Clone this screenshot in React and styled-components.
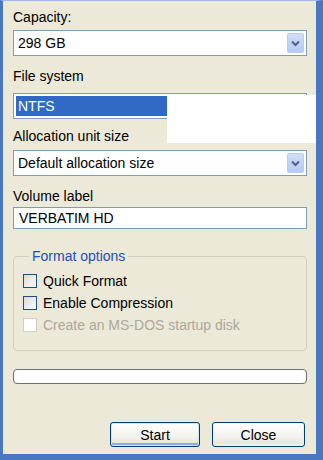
import React from "react";
import styled, { createGlobalStyle } from "styled-components";

const GlobalStyle = createGlobalStyle`
  html, body {
    margin: 0;
    padding: 0;
    background: #ffffff;
  }
  body {
    font-family: "Liberation Sans", Arial, sans-serif;
    font-size: 14px;
    color: #000;
  }
`;

const Frame = styled.div`
  position: relative;
  width: 323px;
  height: 460px;
  box-sizing: border-box;
  background: #ece9d8;
  border-top: 1px solid #9db7e6;
  border-left: 3px solid #4a78c0;
  border-right: 7px solid #4a78c0;
  border-bottom: 6px solid #4a78c0;
  overflow: hidden;
`;

const Content = styled.div`
  display: flex;
  flex-direction: column;
  padding: 8px 9px 0 10px;
`;

const Label = styled.div`
  line-height: 17px;
  height: 17px;
  margin-top: ${(p) => p.$top || 0}px;
  margin-bottom: ${(p) => p.$gap || 4}px;
  white-space: nowrap;
`;

const Combo = styled.div`
  display: flex;
  align-items: center;
  height: 26px;
  box-sizing: border-box;
  border: 1px solid #7f9db9;
  background: #fff;
  padding: 2px;
`;

const ComboText = styled.div`
  flex: 1;
  height: 100%;
  display: flex;
  align-items: center;
  padding-left: 2px;
  margin-right: 4px;
  background: ${(p) => (p.$selected ? "#316ac5" : "transparent")};
  color: ${(p) => (p.$selected ? "#fff" : "#000")};
`;

const DropButton = styled.div`
  width: 17px;
  height: 100%;
  box-sizing: border-box;
  border: 1px solid #b9cbf3;
  border-radius: 2px;
  background: linear-gradient(#d2def8, #b5c9f5);
  display: flex;
  align-items: center;
  justify-content: center;
`;

const TextBox = styled.div`
  height: 22px;
  box-sizing: border-box;
  border: 1px solid #7f9db9;
  background: #fff;
  display: flex;
  align-items: center;
  padding-left: 5px;
`;

const Group = styled.fieldset`
  margin: 19px 0 0;
  padding: 9px 9px 17px;
  border: 1px solid #d0d0bf;
  border-radius: 4px;
  display: flex;
  flex-direction: column;
  gap: 6px;
`;

const Legend = styled.legend`
  color: #1f4fb8;
  padding: 0 3px;
  margin-left: 6px;
  line-height: 16px;
`;

const CheckRow = styled.label`
  display: flex;
  align-items: center;
  gap: 6px;
  height: 16px;
  color: ${(p) => (p.$disabled ? "#aca899" : "#000")};
`;

const CheckBox = styled.span`
  width: 14px;
  height: 14px;
  box-sizing: border-box;
  border: 1px solid ${(p) => (p.$disabled ? "#d3d1c5" : "#1c5180")};
  background: ${(p) =>
    p.$disabled ? "#fff" : "linear-gradient(135deg, #dcdcd7, #fbfbf9)"};
`;

const Progress = styled.div`
  margin-top: 18px;
  height: 15px;
  box-sizing: border-box;
  border: 1px solid #6f6f6f;
  border-radius: 4px;
  background: #fff;
`;

const ButtonRow = styled.div`
  display: flex;
  justify-content: flex-end;
  gap: 12px;
  margin-top: 38px;
  padding-right: 2px;
`;

const Button = styled.button`
  width: ${(p) => p.$w || 90}px;
  height: 25px;
  box-sizing: border-box;
  border: 1px solid #003c74;
  border-radius: 3px;
  font: inherit;
  color: #000;
  background: linear-gradient(#ffffff, #f3f2ec 60%, #e3e0d6);
  box-shadow: ${(p) =>
    p.$default ? "inset 0 0 0 1px #cee7ff, inset 0 -2px 0 1px #89adeb" : "inset 0 -1px 0 1px #f0efe8"};
  padding: 0;
`;

const Redact = styled.div`
  position: absolute;
  left: 164px;
  top: 94px;
  width: 150px;
  height: 48px;
  background: #fff;
`;

const Chevron = () => (
  <svg width="9" height="7" viewBox="0 0 9 7">
    <path d="M1 1.5 L4.5 5 L8 1.5" fill="none" stroke="#4d6185" strokeWidth="2" />
  </svg>
);

const Select = ({ value, selected }) => (
  <Combo>
    <ComboText $selected={selected}>{value}</ComboText>
    <DropButton>
      <Chevron />
    </DropButton>
  </Combo>
);

export default function App() {
  return (
    <>
      <GlobalStyle />
      <Frame>
        <Content>
          <Label>Capacity:</Label>
          <Select value="298 GB" />
          <Label $top={12} $gap={8}>File system</Label>
          <Select value="NTFS" selected />
          <Label $top={9} $gap={5}>Allocation unit size</Label>
          <Select value="Default allocation size" />
          <Label $top={12} $gap={2}>Volume label</Label>
          <TextBox>VERBATIM HD</TextBox>
          <Group>
            <Legend>Format options</Legend>
            <CheckRow>
              <CheckBox />
              Quick Format
            </CheckRow>
            <CheckRow>
              <CheckBox />
              Enable Compression
            </CheckRow>
            <CheckRow $disabled>
              <CheckBox $disabled />
              Create an MS-DOS startup disk
            </CheckRow>
          </Group>
          <Progress />
          <ButtonRow>
            <Button $default>Start</Button>
            <Button $w={93}>Close</Button>
          </ButtonRow>
        </Content>
        <Redact />
      </Frame>
    </>
  );
}
